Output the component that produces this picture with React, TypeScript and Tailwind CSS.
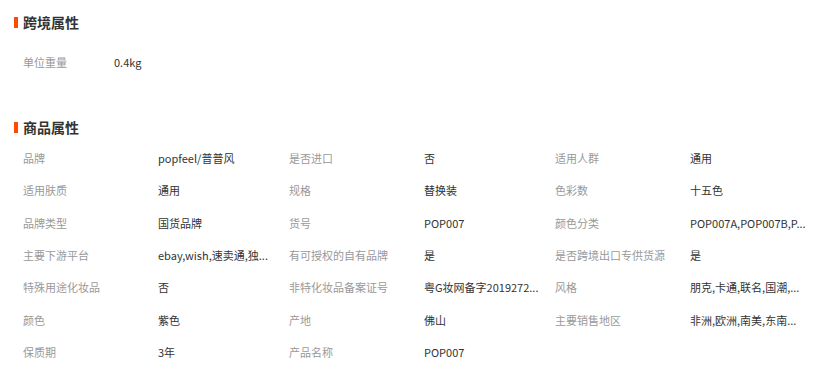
import React from "react";

const rows: [string, string][][] = [
  [["品牌", "popfeel/普普风"], ["是否进口", "否"], ["适用人群", "通用"]],
  [["适用肤质", "通用"], ["规格", "替换装"], ["色彩数", "十五色"]],
  [["品牌类型", "国货品牌"], ["货号", "POP007"], ["颜色分类", "POP007A,POP007B,P..."]],
  [["主要下游平台", "ebay,wish,速卖通,独..."], ["有可授权的自有品牌", "是"], ["是否跨境出口专供货源", "是"]],
  [["特殊用途化妆品", "否"], ["非特化妆品备案证号", "粤G妆网备字2019272..."], ["风格", "朋克,卡通,联名,国潮,..."]],
  [["颜色", "紫色"], ["产地", "佛山"], ["主要销售地区", "非洲,欧洲,南美,东南..."]],
  [["保质期", "3年"], ["产品名称", "POP007"]],
];

function Title({ text }: { text: string }) {
  return (
    <div className="flex items-center h-[20px] pl-[14px]">
      <div className="w-[4px] h-[11px] bg-[#ff4a00]" />
      <div className="ml-[5px] text-[14px] font-bold text-[#333333] leading-[20px]">{text}</div>
    </div>
  );
}

export default function App() {
  return (
    <div
      className="w-[825px] h-[371px] bg-white overflow-hidden pt-[12px]"
      style={{ fontFamily: '"Noto Sans CJK SC", "Liberation Sans", sans-serif' }}
    >
      <Title text="跨境属性" />
      <div className="mt-[14px] pl-[23px] flex items-center h-[32px] text-[11px] leading-[16px]">
        <div className="w-[91px] text-[#999999]">单位重量</div>
        <div className="text-[#333333]">0.4kg</div>
      </div>
      <div className="mt-[39px]">
        <Title text="商品属性" />
      </div>
      <div className="mt-[5px] pl-[23px]">
        {rows.map((r, i) => (
          <div key={i} className="flex h-[32.33px] items-center text-[11px] leading-[16px]">
            {r.map(([k, v], j) => (
              <div key={j} className="w-[266px] flex items-center">
                <div className="w-[135px] text-[#999999] whitespace-nowrap">{k}</div>
                <div className="w-[125px] text-[#333333] whitespace-nowrap overflow-hidden">{v}</div>
              </div>
            ))}
          </div>
        ))}
      </div>
    </div>
  );
}
